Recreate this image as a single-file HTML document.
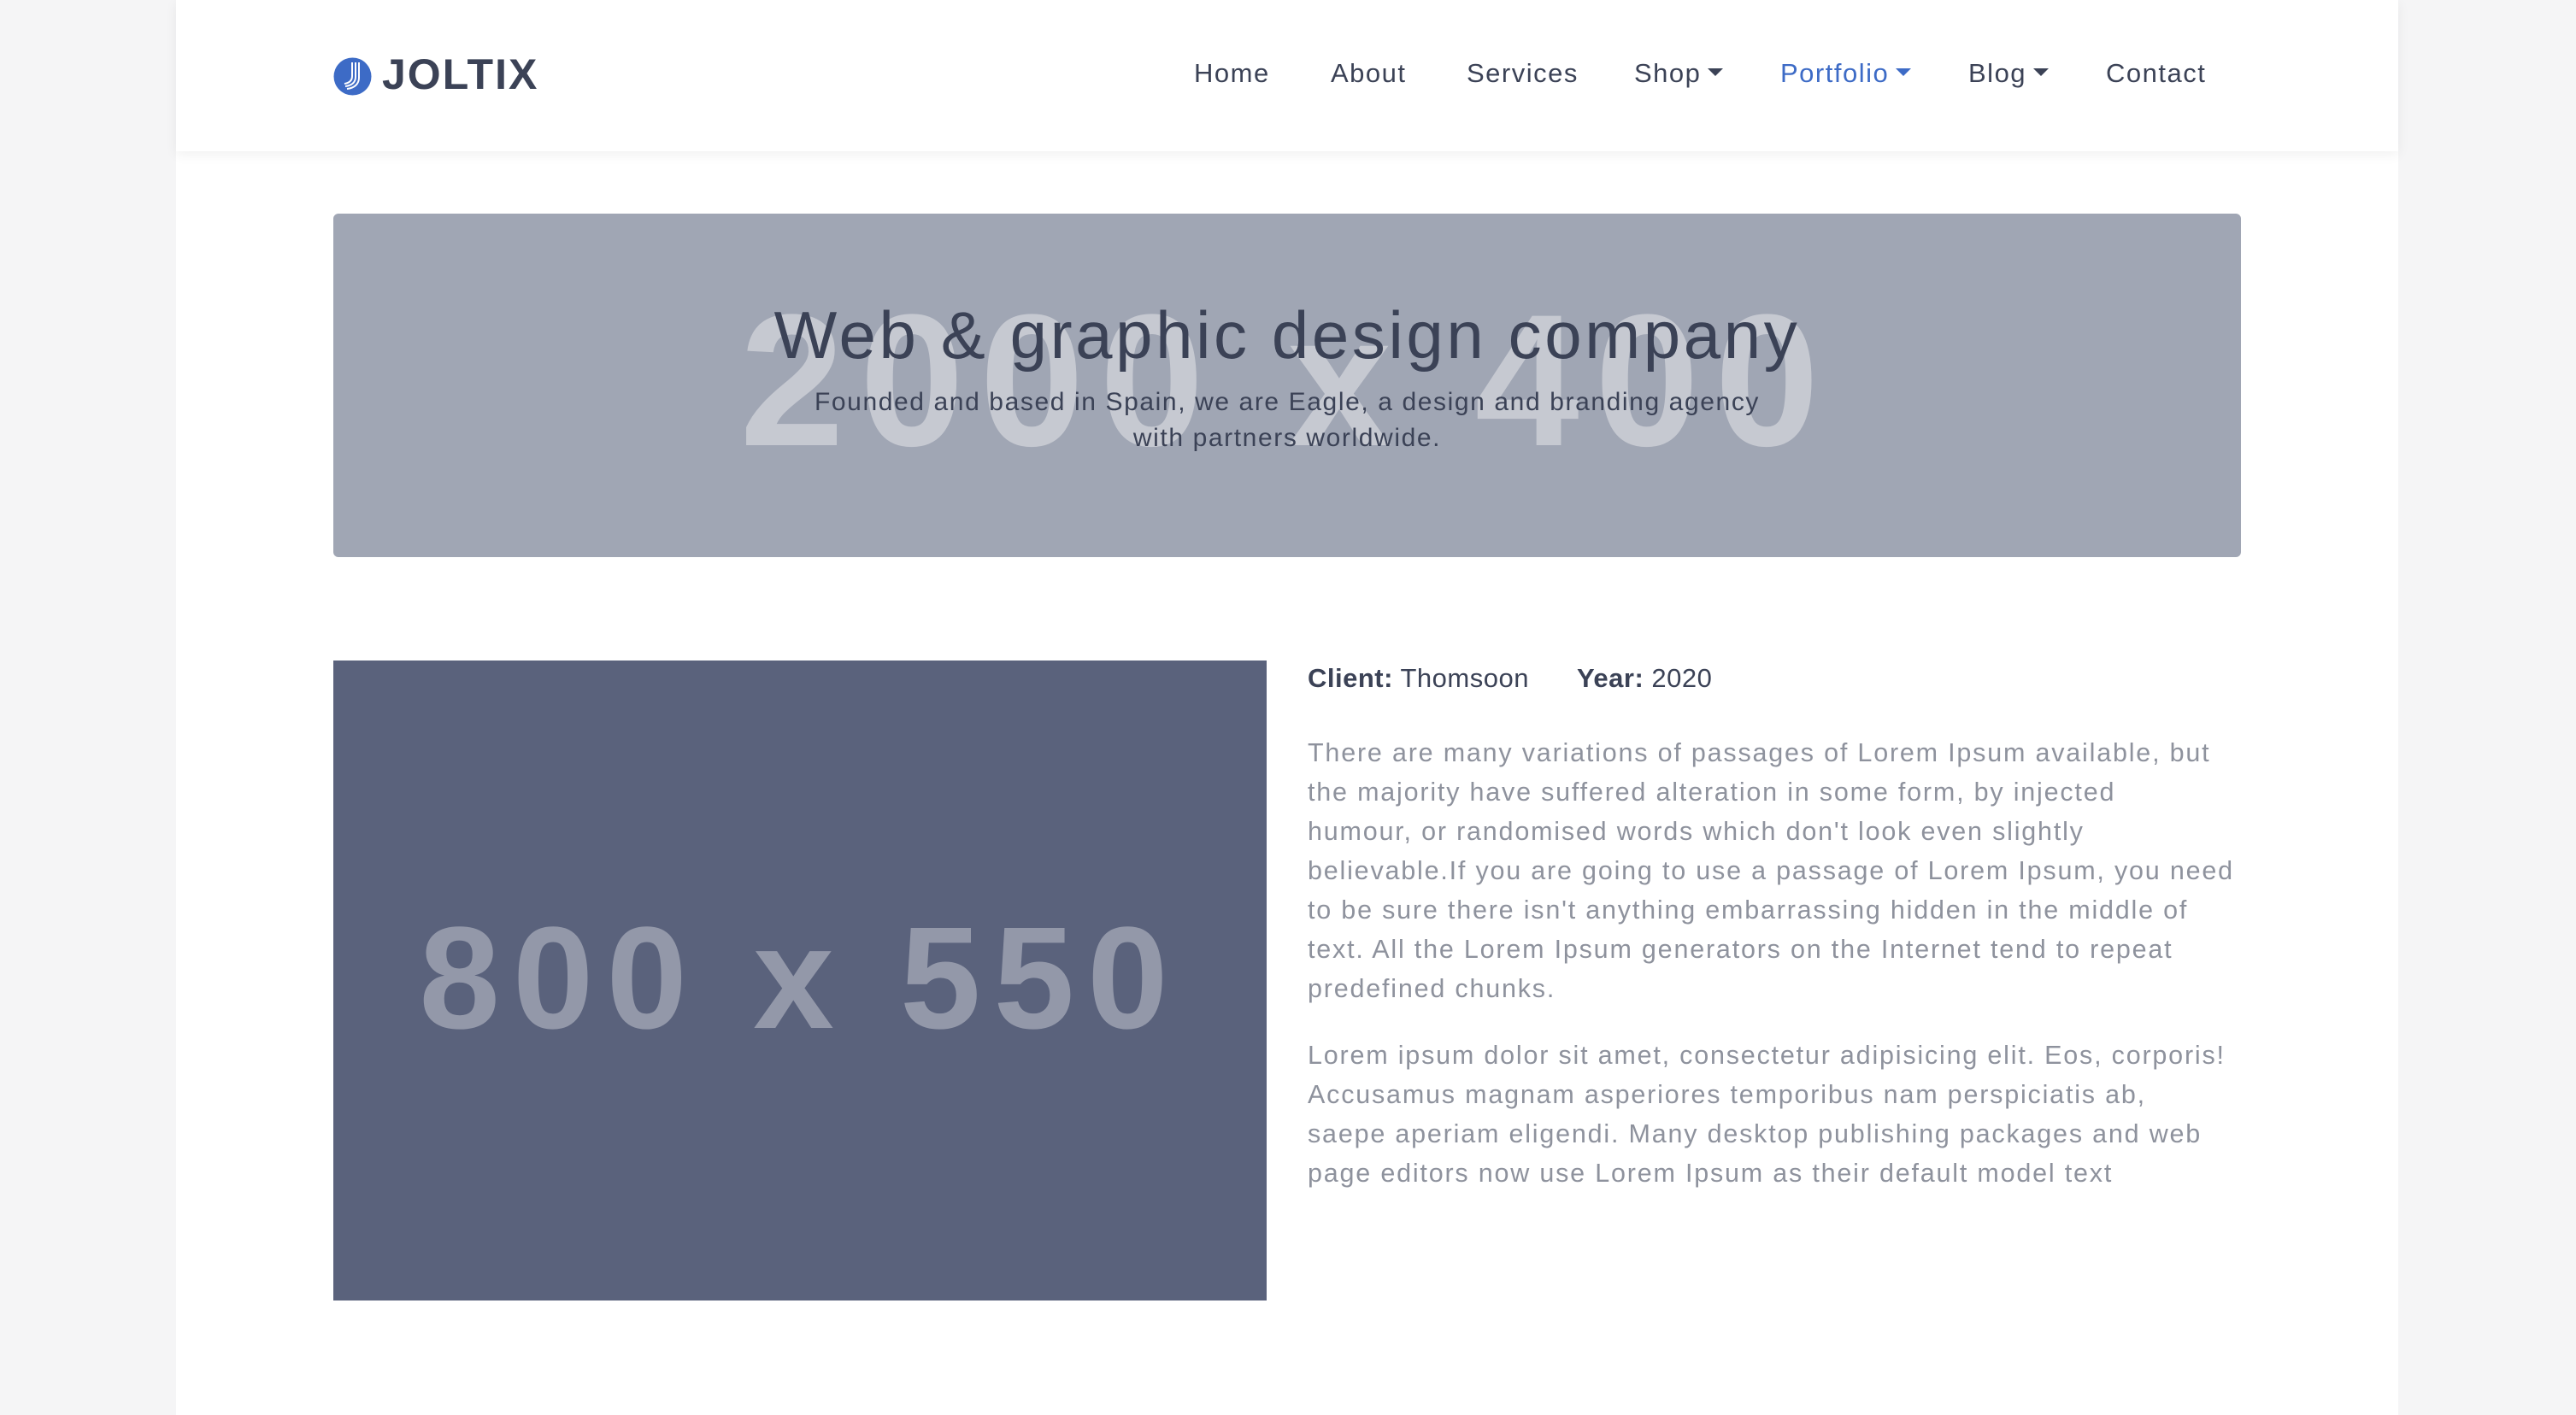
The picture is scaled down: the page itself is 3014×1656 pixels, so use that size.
<!DOCTYPE html>
<html><head><meta charset="utf-8"><style>
*{margin:0;padding:0;box-sizing:border-box}
body{width:3014px;height:1656px;background:#f5f5f6;font-family:"Liberation Sans",sans-serif;position:relative;overflow:hidden}
.wrap{position:absolute;left:206px;top:0;width:2600px;height:1656px;background:#fff}
.hdr{position:absolute;left:206px;top:0;width:2600px;height:177px;background:#fff;box-shadow:0 4px 14px rgba(0,0,0,.06)}
.a{position:absolute;white-space:nowrap}
.nav{font-size:31px;color:#3b4256;top:68px;letter-spacing:1.5px}
.car{display:inline-block;width:0;height:0;border-left:9px solid transparent;border-right:9px solid transparent;border-top:9px solid currentColor;vertical-align:middle;margin-left:8px;margin-top:-6px}
.p{font-size:30.5px;color:#8e929d;left:1530px;letter-spacing:1.8px}
</style></head><body>
<div class="wrap"></div>
<div class="hdr"></div>
<svg class="a" style="left:390px;top:67px" width="45" height="45" viewBox="0 0 45 45"><circle cx="22.5" cy="22.5" r="22" fill="#3d6bc6"/><path d="M22 6v16c0 5-3 8-9 9M26 6v17c0 6-4 10-12 11M30 6v18c0 7-5 12-14 13" stroke="#fff" stroke-width="2" fill="none"/></svg>
<div class="a" style="left:447px;top:58px;font-size:50px;font-weight:bold;color:#3b4256;letter-spacing:2px">JOLTIX</div>
<div class="a nav" style="left:1397px">Home</div>
<div class="a nav" style="left:1557px">About</div>
<div class="a nav" style="left:1716px">Services</div>
<div class="a nav" style="left:1912px">Shop<span class="car"></span></div>
<div class="a nav" style="left:2083px;color:#3d6bc6">Portfolio<span class="car"></span></div>
<div class="a nav" style="left:2303px">Blog<span class="car"></span></div>
<div class="a nav" style="left:2464px">Contact</div>
<div class="a" style="left:390px;top:250px;width:2232px;height:402px;background:#a0a6b4;border-radius:6px"></div>
<div class="a" style="left:390px;top:325px;width:2232px;text-align:center;font-size:220px;font-weight:bold;color:#c6c9d1;line-height:240px;letter-spacing:18px">2000 x 400</div>
<div class="a" style="left:390px;top:345px;width:2232px;text-align:center;font-size:78px;color:#3b4256;line-height:94px;letter-spacing:3.6px">Web &amp; graphic design company</div>
<div class="a" style="left:390px;top:450px;width:2232px;text-align:center;font-size:30px;color:#3b4256;line-height:42px;letter-spacing:1.6px">Founded and based in Spain, we are Eagle, a design and branding agency<br>with partners worldwide.</div>
<div class="a" style="left:390px;top:773px;width:1092px;height:749px;background:#5a627c"></div>
<div class="a" style="left:390px;top:1050px;width:1092px;text-align:center;font-size:170px;font-weight:bold;color:#9398a9;line-height:190px;letter-spacing:15px">800 x 550</div>
<div class="a" style="left:1530px;top:776px;font-size:31px;color:#3b4256;letter-spacing:0.5px"><b>Client:</b> Thomsoon<span style="display:inline-block;width:56px"></span><b>Year:</b> 2020</div>
<div class="a p" style="top:858px;line-height:46px">There are many variations of passages of Lorem Ipsum available, but<br>the majority have suffered alteration in some form, by injected<br>humour, or randomised words which don't look even slightly<br>believable.If you are going to use a passage of Lorem Ipsum, you need<br>to be sure there isn't anything embarrassing hidden in the middle of<br>text. All the Lorem Ipsum generators on the Internet tend to repeat<br>predefined chunks.</div>
<div class="a p" style="top:1212px;line-height:46px">Lorem ipsum dolor sit amet, consectetur adipisicing elit. Eos, corporis!<br>Accusamus magnam asperiores temporibus nam perspiciatis ab,<br>saepe aperiam eligendi. Many desktop publishing packages and web<br>page editors now use Lorem Ipsum as their default model text</div>
</body></html>
